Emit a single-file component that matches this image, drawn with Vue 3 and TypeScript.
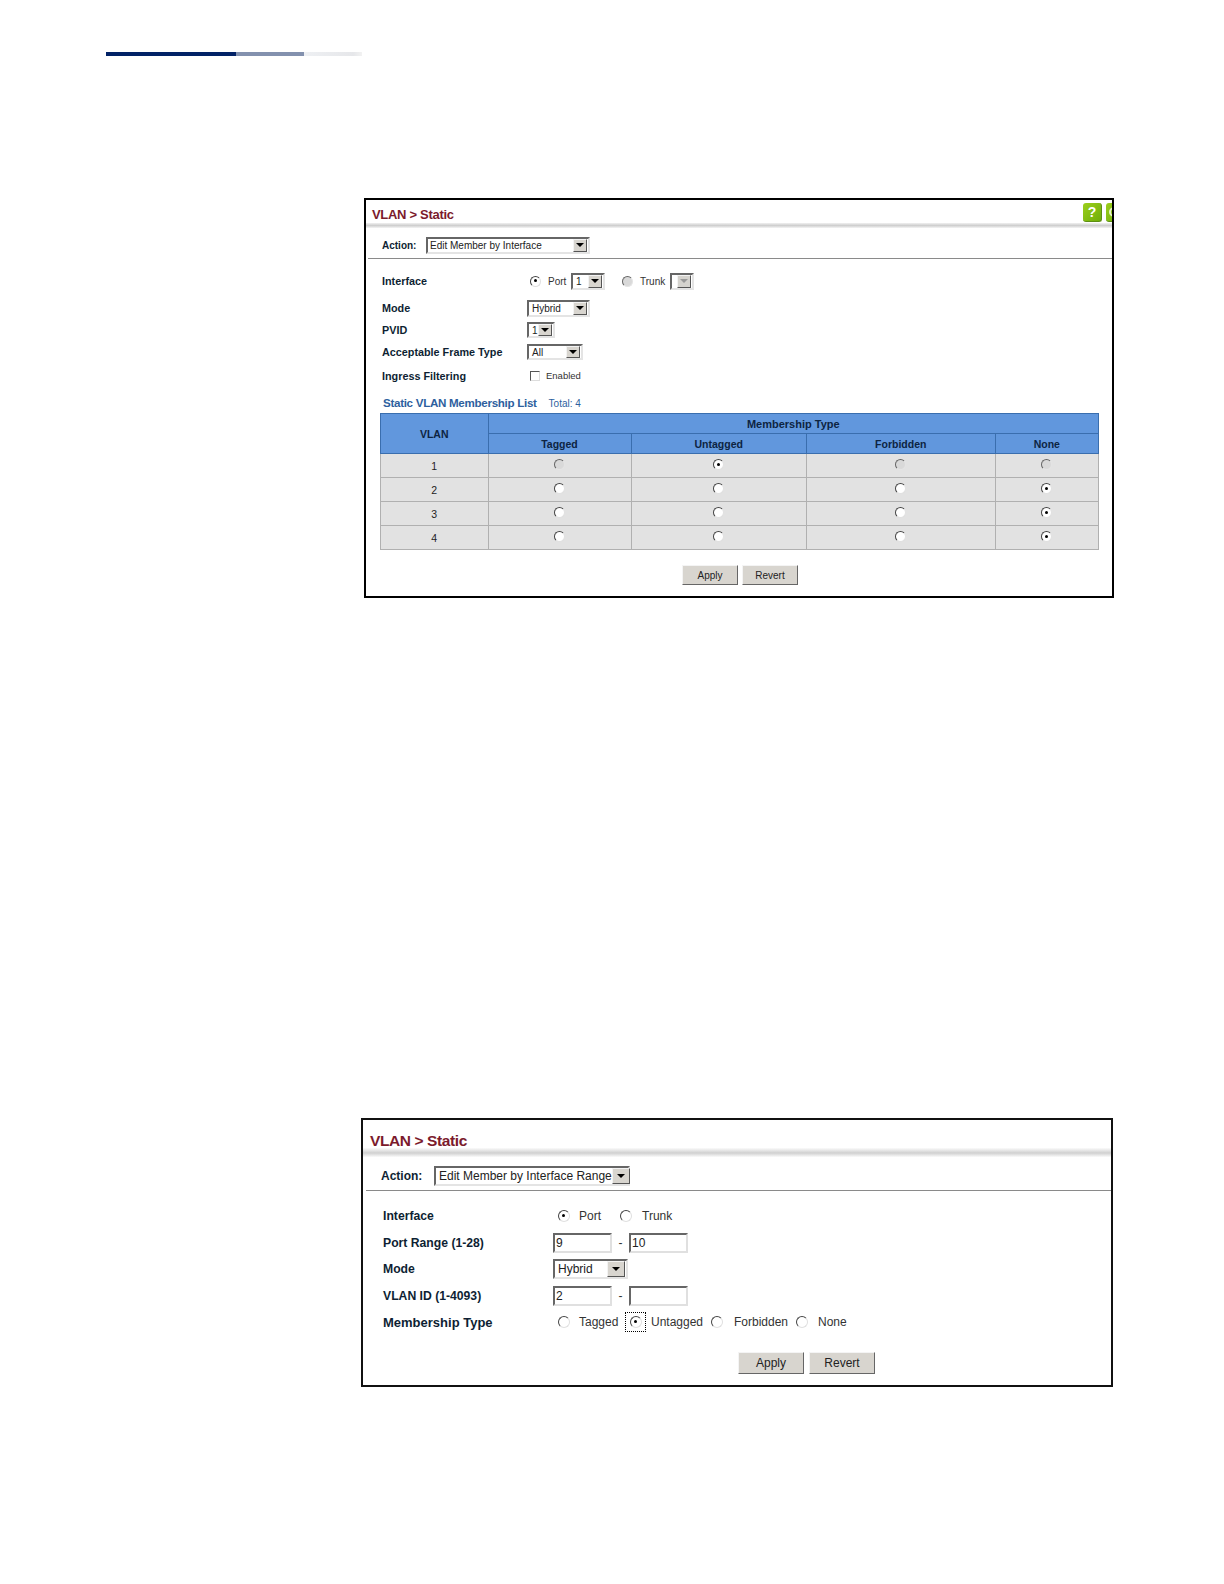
<script setup lang="ts">
const rows = [
  { id: 1, sel: 1 },
  { id: 2, sel: 3 },
  { id: 3, sel: 3 },
  { id: 4, sel: 3 },
]
const columns = ['Tagged', 'Untagged', 'Forbidden', 'None']
</script>

<template>
  <div class="page">
    <div class="rule"><i class="r1"></i><i class="r2"></i><i class="r3"></i></div>

    <section class="panel p1">
      <header class="title">
        <h2>VLAN &gt; Static</h2>
        <span class="help">?</span>
        <span class="help second"></span>
      </header>
      <div class="shade"></div>
      <div class="action">
        <b>Action:</b>
        <span class="sel sel-action"><span>Edit Member by Interface</span><i class="arrow"></i></span>
      </div>
      <div class="form">
        <div class="row r-interface">
          <b>Interface</b>
          <div class="ctl">
            <span class="radio on m-port"></span><span class="lb port-lb">Port</span>
            <span class="sel sel-port"><span>1</span><i class="arrow"></i></span>
            <span class="radio dis m-trunk"></span><span class="lb trunk-lb">Trunk</span>
            <span class="sel sel-trunk dis"><span></span><i class="arrow"></i></span>
          </div>
        </div>
        <div class="row r-mode">
          <b>Mode</b>
          <div class="ctl"><span class="sel sel-mode"><span>Hybrid</span><i class="arrow"></i></span></div>
        </div>
        <div class="row r-pvid">
          <b>PVID</b>
          <div class="ctl"><span class="sel sel-pvid"><span>1</span><i class="arrow"></i></span></div>
        </div>
        <div class="row r-frame">
          <b>Acceptable Frame Type</b>
          <div class="ctl"><span class="sel sel-all"><span>All</span><i class="arrow"></i></span></div>
        </div>
        <div class="row r-ingress">
          <b>Ingress Filtering</b>
          <div class="ctl"><span class="check"></span><span class="lb en-lb">Enabled</span></div>
        </div>
      </div>
      <div class="list-head"><b>Static VLAN Membership List</b><span>Total: 4</span></div>
      <table class="grid">
        <colgroup>
          <col class="c0" /><col class="c1" /><col class="c2" /><col class="c3" /><col class="c4" />
        </colgroup>
        <thead>
          <tr class="h1"><th rowspan="2">VLAN</th><th colspan="4">Membership Type</th></tr>
          <tr class="h2"><th v-for="c in columns" :key="c">{{ c }}</th></tr>
        </thead>
        <tbody>
          <tr v-for="r in rows" :key="r.id">
            <td class="vid">{{ r.id }}</td>
            <td v-for="(c, i) in columns" :key="c">
              <span class="radio" :class="{ on: r.sel === i, dim: r.id === 1 && r.sel !== i }"></span>
            </td>
          </tr>
        </tbody>
      </table>
      <div class="btns">
        <span class="btn">Apply</span>
        <span class="btn">Revert</span>
      </div>
    </section>

    <section class="panel p2">
      <header class="title"><h2>VLAN &gt; Static</h2></header>
      <div class="shade"></div>
      <div class="action">
        <b>Action:</b>
        <span class="sel sel-action"><span>Edit Member by Interface Range</span><i class="arrow"></i></span>
      </div>
      <div class="form">
        <div class="row">
          <b>Interface</b>
          <div class="ctl">
            <span class="radio on"></span><span class="lb l-port">Port</span>
            <span class="radio"></span><span class="lb l-trunk">Trunk</span>
          </div>
        </div>
        <div class="row">
          <b>Port Range (1-28)</b>
          <div class="ctl"><span class="inp">9</span><span class="dash">-</span><span class="inp">10</span></div>
        </div>
        <div class="row">
          <b>Mode</b>
          <div class="ctl"><span class="sel sel-mode"><span>Hybrid</span><i class="arrow"></i></span></div>
        </div>
        <div class="row">
          <b>VLAN ID (1-4093)</b>
          <div class="ctl"><span class="inp">2</span><span class="dash">-</span><span class="inp"></span></div>
        </div>
        <div class="row member">
          <b>Membership Type</b>
          <div class="ctl">
            <span class="radio"></span><span class="lb l-tag">Tagged</span>
            <span class="focus"><span class="radio on"></span></span><span class="lb l-untag">Untagged</span>
            <span class="radio"></span><span class="lb l-forb">Forbidden</span>
            <span class="radio"></span><span class="lb l-none">None</span>
          </div>
        </div>
      </div>
      <div class="btns">
        <span class="btn">Apply</span>
        <span class="btn">Revert</span>
      </div>
    </section>
  </div>
</template>

<style>
body { background: #fff; }
</style>

<style scoped>
.page {
  width: 1224px;
  height: 1584px;
  font-family: "Liberation Sans", Arial, sans-serif;
  color: #1a1a1a;
  overflow: hidden;
  padding-top: 52px;
  box-sizing: border-box;
}
.rule { display: flex; height: 4px; margin-left: 106px; }
.rule i { display: block; height: 4px; }
.r1 { width: 130px; background: #022266; }
.r2 { width: 68px; background: #8391ae; }
.r3 { width: 58px; background: linear-gradient(90deg, #eef0f3, #e6e7ea 85%, #f2f2f2); }

.panel { box-sizing: border-box; border: 2px solid #000; background: #fff; overflow: hidden; position: relative; }
.p1 { width: 750px; height: 400px; margin: 142px 0 0 364px; }
.p2 { width: 752px; height: 269px; margin: 520px 0 0 361px; border-color: #111; }

.title { display: flex; align-items: center; box-sizing: border-box; }
.title h2 { margin: 0; font-weight: 700; color: #7b1a2c; white-space: nowrap; }
.p1 .title { height: 23px; padding: 6px 0 0 6px; }
.p1 .title h2 { font-size: 13px; letter-spacing: -0.3px; }
.p2 .title { height: 28px; padding: 14px 0 0 7px; }
.p2 .title h2 { font-size: 15.5px; letter-spacing: -0.4px; }
.shade { height: 5px; background: linear-gradient(#f0f0f0, #cfcfcf 50%, #f4f4f4); }
.p2 .shade { height: 9px; background: linear-gradient(#fbfbfb, #d0d0d0 55%, #fbfbfb); }

.help {
  width: 19px; height: 19px; flex: none; border-radius: 3px; margin: -4px 0 0 auto;
  background: linear-gradient(135deg, #9ccf1c, #6fae0a);
  border-right: 1px solid #5d8f12; border-bottom: 1px solid #5d8f12; box-sizing: border-box;
  color: #fff; font-weight: 700; font-size: 14px; line-height: 18px; text-align: center;
  position: relative;
}
.help.second { margin-left: 4px; margin-right: -13px; }
.help.second::before {
  content: ""; position: absolute; left: 3px; top: 4px; width: 10px; height: 10px; box-sizing: border-box;
  border: 2px solid #e9f5c9; border-radius: 50%;
}

.action { display: flex; align-items: center; box-sizing: border-box; border-bottom: 1px solid #8a8a8a; margin-left: 2px; padding-top: 4px; }
.action b { display: block; color: #0e1f33; }
.p1 .action { height: 31px; padding-left: 14px; font-size: 10px; }
.p1 .action b { width: 44px; }
.p2 .action { height: 34px; padding-left: 15px; font-size: 12px; margin-left: 3px; }
.p2 .action b { width: 53px; }

.sel {
  display: inline-flex; align-items: center; justify-content: space-between; box-sizing: border-box;
  background: #fff; font-weight: 400; color: #222; white-space: nowrap;
  border: 2px solid; border-color: #666 #e4e4e4 #e4e4e4 #666; padding: 0 1px 0 3px;
}
.arrow {
  display: flex; align-items: center; justify-content: center; box-sizing: border-box; flex: none;
  width: 14px; height: 100%; background: #d8d5cf;
  border: 1px solid; border-color: #f3f3f3 #555 #555 #f3f3f3;
}
.arrow::after { content: ""; border: 4px solid transparent; border-top: 4px solid #000; border-bottom: 0; }
.sel.dis .arrow { background: #d5d3ce; }
.sel.dis .arrow::after { border-top-color: #999; }
.p1 .sel-action { width: 164px; height: 17px; font-size: 9.5px; padding-left: 2px; }
.p2 .sel-action { width: 196px; height: 20px; font-size: 12px; }

.form { font-size: 10.8px; }
.row { display: flex; align-items: center; }
.row b { display: block; color: #0e1f33; }
.ctl { display: flex; align-items: center; position: relative; }
.lb { color: #333; display: block; }

.p1 .form { margin-top: 10px; }
.p1 .row { padding-left: 16px; }
.p1 .row b { width: 145px; flex: none; }
.r-interface { height: 24px; }
.r-mode { height: 22px; margin-top: 4px; }
.r-pvid { height: 22px; }
.r-frame { height: 22px; }
.r-ingress { height: 22px; margin-top: 2px; }
.p1 .ctl { font-size: 10px; }
.p1 .sel { font-size: 10px; }
.m-port { margin-left: 3px; }
.port-lb { margin-left: 7px; width: 22px; }
.sel-port { width: 34px; height: 17px; margin-left: 1px; }
.m-trunk { margin-left: 17px; }
.trunk-lb { margin-left: 7px; width: 30px; }
.sel-trunk { width: 24px; height: 17px; }
.p1 .sel-mode { width: 63px; height: 17px; }
.sel-pvid { width: 28px; height: 16px; }
.sel-all { width: 56px; height: 16px; }
.check {
  display: block; box-sizing: border-box; width: 10px; height: 10px; margin-left: 3px;
  background: #fff; border: 1px solid; border-color: #555 #ddd #ddd #555;
}
.en-lb { margin-left: 6px; font-size: 9.5px; position: relative; top: -1px; }

.radio {
  display: inline-block; box-sizing: border-box; width: 11px; height: 11px; border-radius: 50%; flex: none;
  background: #fff; border: 1.5px solid; border-color: #444 #e0e0e0 #e0e0e0 #444;
  position: relative;
}
.radio.on::after {
  content: ""; position: absolute; left: 2.5px; top: 2.5px; width: 3px; height: 3px; border-radius: 50%; background: #000;
}
.radio.dim, .radio.dis { background: #d9d9d9; border-color: #666 #e4e4e4 #e4e4e4 #666; }

.list-head { display: flex; align-items: baseline; margin: 6px 0 0 17px; height: 20px; line-height: 20px; }
.list-head b { font-size: 11.6px; color: #2e5f9e; letter-spacing: -0.3px; }
.list-head span { font-size: 10px; color: #2e5f9e; margin-left: 12px; }

.grid {
  border-collapse: collapse; table-layout: fixed; width: 718px; margin: 0 0 0 14px;
  font-size: 10.5px;
}
.c0 { width: 107.5px; } .c1 { width: 143px; } .c2 { width: 175.5px; } .c3 { width: 188.5px; } .c4 { width: 103.5px; }
.grid th { background: #6197dd; border: 1px solid #3a6eae; color: #0d2442; font-weight: 700; padding: 0; }
.h1 th { height: 19px; }
.h1 th:nth-child(2) { font-size: 11px; }
.h2 th { height: 19px; }
.grid td { background: #e2e2e2; border: 1px solid #b0b0b0; height: 23px; padding: 0; text-align: center; line-height: 0; }
.grid td.vid { font-size: 10.5px; line-height: 1; color: #222; padding-top: 2px; box-sizing: border-box; }
.grid .radio { top: -1px; }

.btns { display: flex; justify-content: center; }
.p1 .btns { margin-top: 15px; gap: 4px; padding-left: 2px; }
.btn {
  display: block; box-sizing: border-box; text-align: center; background: #d8d5cf; color: #222;
  border: 1px solid; border-color: #f4f4f4 #666 #666 #f4f4f4;
}
.p1 .btn { width: 56px; height: 20px; font-size: 10px; line-height: 19px; }

.p2 .form { font-size: 12.2px; margin-top: 12px; }
.p2 .row { padding-left: 20px; height: 26.5px; }
.p2 .row b { width: 170px; flex: none; font-size: 12.2px; }
.p2 .row.member b { font-size: 13px; }
.p2 .radio { width: 12px; height: 12px; }
.p2 .radio.on::after { left: 3px; top: 3px; }
.p2 .ctl { font-size: 12px; }
.p2 .ctl > .radio:first-child { margin-left: 5px; }
.l-port { margin-left: 9px; width: 41px; }
.l-trunk { margin-left: 10px; }
.inp {
  display: block; box-sizing: border-box; width: 59px; height: 20px; background: #fff;
  border: 2px solid; border-color: #666 #e0e0e0 #e0e0e0 #666; font-size: 12px; line-height: 16px; padding-left: 1px; color: #222;
}
.dash { width: 17px; text-align: center; color: #333; }
.p2 .sel-mode { width: 75px; height: 20px; font-size: 12px; }
.p2 .sel-mode .arrow { width: 18px; }
.p2 .sel-action .arrow { width: 18px; }
.l-tag { margin-left: 9px; width: 46px; }
.focus {
  display: flex; align-items: center; justify-content: center; box-sizing: border-box; width: 21px; height: 20px;
  border: 1px dotted #000;
}
.l-untag { margin-left: 5px; width: 60px; }
.l-forb { margin-left: 11px; width: 62px; }
.l-none { margin-left: 10px; }
.p2 .btns { margin-top: 16px; gap: 5px; justify-content: flex-start; padding-left: 375px; }
.p2 .btn { width: 66px; height: 22px; font-size: 12px; line-height: 21px; }
</style>
